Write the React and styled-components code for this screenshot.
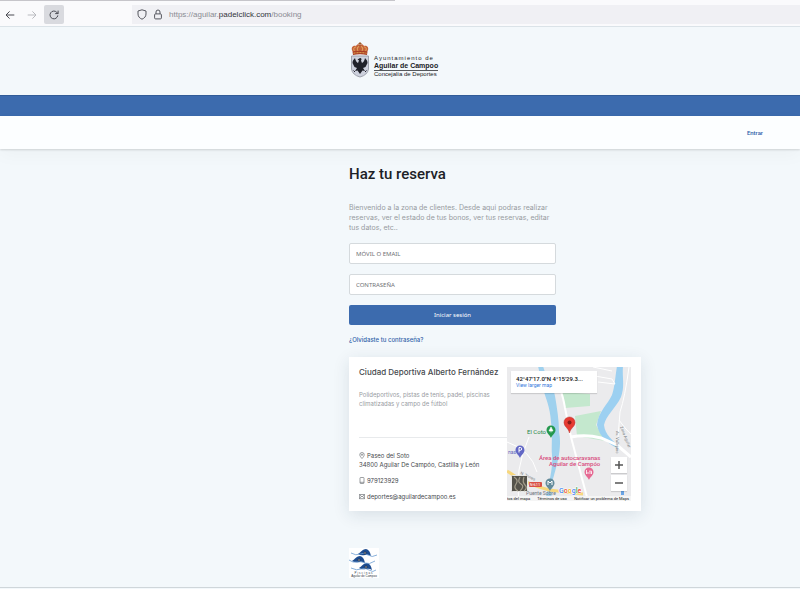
import styled, { createGlobalStyle } from "styled-components";

const GlobalStyle = createGlobalStyle`
  * {
    box-sizing: border-box;
  }

  body {
    margin: 0;
    background: #f3f8fb;
    color: #45484c;
    font-family: Inter, Roboto, sans-serif;
    font-size: 6px;
    line-height: 9px;
  }

  h1, h2, p {
    margin: 0;
  }

  a {
    color: #2f5fa8;
    text-decoration: none;
  }
`;

const App = () => {
  return (
    <>
      <GlobalStyle />
      <BrowserBar />
      <Header>
        <Column>
          <TownLogo />
        </Column>
      </Header>
      <Stripe />
      <Nav>
        <EnterLink href="#entrar">Entrar</EnterLink>
      </Nav>
      <Column as="main">
        <Login />
        <ClubCard />
      </Column>
      <Footer>
        <Column>
          <PoolLogo />
        </Column>
      </Footer>
    </>
  );
};

export default App;

/* ---------- browser ---------- */

const BrowserBar = () => (
  <Bar>
    <BarButton aria-label="Back">
      <svg width="10" height="10" viewBox="0 0 10 10" fill="none" stroke="#4a4b53">
        <path d="M9.3 5H1M4.6 1.4 1 5l3.6 3.6" />
      </svg>
    </BarButton>
    <BarButton aria-label="Forward">
      <svg width="10" height="10" viewBox="0 0 10 10" fill="none" stroke="#b9babf">
        <path d="M.7 5H9M5.4 1.4 9 5 5.4 8.6" />
      </svg>
    </BarButton>
    <BarButton aria-label="Reload" $active>
      <svg width="10" height="10" viewBox="0 0 10 10" fill="none" stroke="#4a4b53">
        <path d="M8.8 5.4A3.9 3.9 0 1 1 7.7 2.2L9 3.5M9.1.6v3H6.2" />
      </svg>
    </BarButton>
    <Address>
      <svg width="10" height="11" viewBox="0 0 10 11" fill="none" stroke="#55565e">
        <path d="M5 .8 9 2v3c0 2.600-1.700 4.200-4 5.200C2.700 9.200 1 7.600 1 5V2Z" />
      </svg>
      <svg width="8" height="11" viewBox="0 0 8 11" fill="none" stroke="#55565e">
        <rect x=".6" y="4.900" width="6.800" height="5" rx="1" />
        <path d="M2 4.900V3a2 2 0 0 1 4 0v1.900" />
      </svg>
      <span>
        https://aguilar.<b>padelclick.com</b>/booking
      </span>
    </Address>
  </Bar>
);

const Bar = styled.div`
  display: flex;
  align-items: center;
  gap: 2px;
  height: 27px;
  padding-top: 3px;
  background: linear-gradient(90deg, #c6c5ca, #c6c5ca) 0 0 / 395px 1px no-repeat #fafafc;
  border-bottom: 1px solid #dbe3e8;
`;

const BarButton = styled.button`
  display: grid;
  place-items: center;
  width: 20px;
  height: 19px;
  padding: 0;
  border: 0;
  border-radius: 2px;
  background: ${({ $active }) => ($active ? "#d9dadf" : "transparent")};
`;

const Address = styled.div`
  flex: 1;
  display: flex;
  align-items: center;
  gap: 7px;
  height: 19px;
  margin-left: 66px;
  padding-left: 5px;
  background: #f0f0f4;
  color: #8b8c93;
  font-family: "Liberation Sans", sans-serif;
  font-size: 8px;

  b {
    color: #33343b;
    font-weight: 400;
  }
`;

/* ---------- header ---------- */

const TownLogo = () => (
  <Town>
    <svg width="20" height="36" viewBox="0 0 20 36">
      <path d="M3 10C0 6 3 3 6 4c1-2 3-2 4-1 1-1 3-1 4 1 3-1 6 2 3 6Z" fill="#c4633a" />
      <path d="M10 0v4M8.500 1.500h3" stroke="#9c5b29" strokeWidth="1" />
      <path d="M4.500 9C3 7 4 5 6 5M8 9c-1-2-1-4 1-4.500M12 9c1-2 1-4-1-4.500M15.500 9C17 7 16 5 14 5" stroke="#efc168" fill="none" strokeWidth=".8" />
      <path d="M2.500 9.500q7.500-1.500 15 0L17 13q-7-1.500-14 0Z" fill="#a93d25" />
      <path d="M3.500 11.200q6.500-1.200 13 0" stroke="#edbd59" strokeDasharray="2 1" fill="none" />
      <path d="M1.500 14h17v13q-1 6-8.500 8-7.500-2-8.500-8Z" fill="#cdd1dd" stroke="#9ea2ad" />
      <path d="M10 16c1.800 0 1.800 1.500 1 2.500l1 2.500c1.500-.5 2.500-2.500 3-5 1.500 1.500 2.500 3 2.500 5L15.500 25 13 26l2 3-2.500-.5L10 32l-2.500-3.500L5 29l2-3-2.500-1L2.500 21c0-2 1-3.500 2.500-5 .5 2.500 1.500 4.500 3 5l1-2.500L7.500 17.500Z" fill="#20222a" />
      <path d="m5 30-1.500-1.500M15 30l1.500-1.500" stroke="#20222a" />
    </svg>
    <TownName>
      <span>Ayuntamiento de</span>
      <strong>Aguilar de Campoo</strong>
      <small>Concejalía de Deportes</small>
    </TownName>
  </Town>
);

const Column = styled.div`
  max-width: 451px;
  margin-left: auto;
  padding-right: 36px;
`;

const Header = styled.header`
  padding: 15px 0 17px;
`;

const Town = styled.div`
  display: flex;
  align-items: center;
  gap: 4px;
  padding-left: 1px;
`;

const TownName = styled.div`
  display: flex;
  flex-direction: column;
  padding-top: 12px;
  color: #202226;
  font-family: "Liberation Sans", sans-serif;
  font-size: 6px;
  line-height: 7px;

  span {
    letter-spacing: 1px;
  }

  strong {
    padding-bottom: 1px;
    border-bottom: 1px solid #55585c;
    font-size: 7px;
    font-weight: 900;
  }

  small {
    font-size: 6px;
  }
`;

const Stripe = styled.div`
  height: 21px;
  background: #3c6bae;
  border-top: 1px solid #315c98;
`;

const Nav = styled.nav`
  display: flex;
  justify-content: flex-end;
  padding: 12px 37px;
  background: #fcfeff;
  box-shadow: 0 1px 2px #00000024, 0 6px 18px #00000008;
`;

const EnterLink = styled.a`
  font-family: Roboto, sans-serif;
  font-weight: 500;
`;

/* ---------- login ---------- */

const Login = () => (
  <Form onSubmit={(e) => e.preventDefault()}>
    <h1>Haz tu reserva</h1>
    <p>
      Bienvenido a la zona de clientes. Desde aqui podras realizar reservas, ver el estado de tus
      bonos, ver tus reservas, editar tus datos, etc..
    </p>
    <Field type="text" placeholder="MÓVIL O EMAIL" aria-label="Móvil o email" />
    <Field type="password" placeholder="CONTRASEÑA" aria-label="Contraseña" />
    <Submit type="submit">Iniciar sesión</Submit>
    <ForgotLink href="#recuperar">¿Olvidaste tu contraseña?</ForgotLink>
  </Form>
);

const Form = styled.form`
  display: flex;
  flex-direction: column;
  gap: 10px;
  max-width: 207px;
  padding: 16px 0 13px;

  h1 {
    color: #1c2126;
    font-family: Roboto, sans-serif;
    font-size: 15px;
    line-height: 18px;
    font-weight: 500;
  }

  p {
    padding: 10px 4px 0 0;
    color: #979b9f;
    font-size: 7px;
    line-height: 10px;
  }
`;

const Field = styled.input`
  height: 21px;
  padding: 0 6px;
  border: 1px solid #d5dadd;
  border-radius: 2px;
  background: #fff;
  color: #45484c;
  font-family: "Noto Sans", sans-serif;
  font-size: 6px;

  &::placeholder {
    color: #6f7174;
  }
`;

const Submit = styled.button`
  height: 20px;
  border: 0;
  border-radius: 2px;
  background: #3c6bae;
  color: #fff;
  font-family: "Noto Sans", sans-serif;
  font-size: 6px;
`;

const ForgotLink = styled.a`
  align-self: flex-start;
  font-weight: 500;
`;

/* ---------- club card ---------- */

const ClubCard = () => (
  <Card>
    <Info>
      <h2>Ciudad Deportiva Alberto Fernández</h2>
      <p>Polideportivos, pistas de tenis, padel, piscinas climatizadas y campo de fútbol</p>
      <Contact>
        <div>
          <ContactIcon viewBox="0 0 6 7">
            <path d="M3 6.500C1.600 5 .8 3.800.8 2.700a2.200 2.200 0 0 1 4.400 0C5.200 3.800 4.400 5 3 6.500Z" />
            <circle cx="3" cy="2.700" r=".7" />
          </ContactIcon>
          Paseo del Soto
          <br />
          34800 Aguilar De Campóo, Castilla y León
        </div>
        <div>
          <ContactIcon viewBox="0 0 6 7">
            <rect x="1" y=".5" width="4" height="6" rx=".7" />
            <path d="M1 5.300h4" />
          </ContactIcon>
          979123929
        </div>
        <div>
          <ContactIcon viewBox="0 0 6 7">
            <path d="M.4 1.500h5.200v4.200H.4ZM.5 1.700 3 3.900l2.500-2.200M.5 5.500l1.700-2M5.500 5.500l-1.700-2" />
          </ContactIcon>
          deportes@aguilardecampoo.es
        </div>
      </Contact>
    </Info>
    <Map />
  </Card>
);

const Card = styled.section`
  display: flex;
  max-width: 292px;
  padding: 10px;
  background: #fff;
  box-shadow: 0 4px 16px #1c344c1f;
`;

const Info = styled.div`
  flex: 1;
  display: flex;
  flex-direction: column;
  min-width: 0;

  h2 {
    font-size: 8px;
    line-height: 10px;
    font-weight: 500;
    white-space: nowrap;
  }

  p {
    padding: 13px 8px 0 0;
    color: #989b9f;
  }
`;

const Contact = styled.address`
  display: flex;
  flex-direction: column;
  gap: 7px;
  margin-top: auto;
  padding-top: 13px;
  border-top: 1px solid #e8eaec;
  font-style: normal;
`;

const ContactIcon = styled.svg`
  width: 6px;
  height: 7px;
  margin-right: 2px;
  vertical-align: -1px;
  fill: none;
  stroke: #5b5f64;
  stroke-width: 0.6;
`;

/* ---------- map ---------- */

const Map = () => (
  <MapBox>
    <svg width="124" height="134" viewBox="0 0 124 134">
      <rect width="124" height="134" fill="#ebebed" />
      <path d="M55 25 83 27v12l-25 2ZM68 49l26-5-5 14 9 16-28-5Z" fill="#c4e8ce" />
      <path d="M31-1h5c3 12 10 18 12 30s4 24 4 36c3 14-1 30-6 47l-2 22h-6c5-22 8-34 7-46-1-10 1-20-1-33-1-16-5-22-8-34Z" fill="#9fd1ee" />
      <path d="M110-1h6c-1 12 2 20-2 31-5 11-15 18-17 28 1 10 8 14 18 25-12-4-23-13-25-25 1-13 11-21 15-30 3-9 3-17 5-29Z" fill="#9cd0f1" />
      <g fill="none" stroke="#fff">
        <path d="M53 22q3 7 5 19l6 29 17 64" strokeWidth="2" />
        <path d="M64 70q15-3 30 1l16 7 14 12" strokeWidth="3" />
        <path d="M122 0q-4 30-9 45l-3 38M112 53q8 11 12 14M0 75q24 8 30 30M12 134q-5-30 10-64" />
        <path d="m82 8 23 4 3 5-17-2M86 0l19 4" />
      </g>
      <path d="M0 104q18 13 42 19l34 4" fill="none" stroke="#f7d77d" strokeWidth="3" />
      <g fontFamily="Roboto, sans-serif" fontSize="6">
        <text x="20" y="67" fill="#1d8848">El Coto</text>
        <text x="1" y="87" fontSize="5" fill="#6065bd">nas</text>
        <g fill="#d84b7d" fontWeight="500">
          <text x="32" y="93">Área de autocaravanas</text>
          <text x="42" y="99">Aguilar de Campóo</text>
        </g>
        <text x="19" y="128" fill="#6d757d" fontSize="5">Puente Sobre</text>
        <g fill="#767b80" fontSize="4">
          <text transform="translate(109 64) rotate(90)">Av. Vallejano</text>
          <text transform="translate(113 60) rotate(68)">Zona Aguilar</text>
          <text transform="translate(13 107) rotate(25)">N. Torres</text>
        </g>
      </g>
      <rect x="22" y="115" width="13" height="5" rx="1" fill="#d95045" />
      <text x="28" y="119" fill="#fff" fontSize="4" textAnchor="middle" fontFamily="Roboto, sans-serif">N-611</text>
      <Place x={44} y={63} color="#24984e">
        <path d="m0-3-2 4h4ZM0 1v1.500" stroke="#fff" strokeWidth=".6" />
      </Place>
      <Place x={13} y={83} color="#6267c5">
        <path d="M-1 2.500v-5H.3a1.400 1.400 0 0 1 0 2.800H-1" fill="none" stroke="#fff" />
      </Place>
      <Place x={82} y={105} color="#e66993">
        <path d="M-2.500-2v4M-2.500 1h5v1M0-.8h2.500V1" fill="none" stroke="#fff" strokeWidth=".8" />
      </Place>
      <Place x={43} y={116} color="#648b9b">
        <path d="M-2 2v-4L0 0l2-2v4" fill="none" stroke="#fff" />
      </Place>
      <rect x="114" y="124" width="3" height="4" fill="#6aa5e6" />
      <path d="M62.500 66c-.7-5-5.500-6-5.500-10.500a5.500 5.500 0 0 1 11 0C68 60 63.200 61 62.500 66Z" fill="#e63b32" stroke="#b62d29" strokeWidth=".5" />
      <circle cx="62.500" cy="55.500" r="2" fill="#861d18" />
      <rect x="4.500" y="108.500" width="16" height="16" rx="1" fill="#55534b" stroke="#e7e7e5" />
      <path d="M7 110q5 3 2 7t2 7M13 110q-3 5 1 7t-1 7M17 110q-2 5 1 8t-1 6" fill="none" stroke="#a49e8c" strokeWidth="1.200" />
      <text x="52" y="126" fontSize="7" fontWeight="500" fontFamily="Roboto, sans-serif" stroke="#fff" strokeWidth="1" paintOrder="stroke">
        <tspan fill="#4285f4">G</tspan>
        <tspan fill="#ea4335">o</tspan>
        <tspan fill="#f0ae05">o</tspan>
        <tspan fill="#4285f4">g</tspan>
        <tspan fill="#34a853">l</tspan>
        <tspan fill="#ea4335">e</tspan>
      </text>
    </svg>
    <Coordinates>
      <strong>42°47'17.0"N 4°15'29.3...</strong>
      <a href="#mapa">View larger map</a>
    </Coordinates>
    <ZoomControls>
      <ZoomButton aria-label="Zoom in">
        <svg width="8" height="8" stroke="#555" strokeWidth="1.500">
          <path d="M0 4h8M4 0v8" />
        </svg>
      </ZoomButton>
      <ZoomButton aria-label="Zoom out">
        <svg width="8" height="8" stroke="#555" strokeWidth="1.500">
          <path d="M0 4h8" />
        </svg>
      </ZoomButton>
    </ZoomControls>
    <MapLegal>
      <span>tos del mapa</span>
      <a href="#terminos">Términos de uso</a>
      <a href="#problema">Notificar un problema de Maps</a>
    </MapLegal>
  </MapBox>
);

const Place = ({ x, y, color, children }) => (
  <g transform={`translate(${x} ${y})`}>
    <path d="M0 8C-1 5-4.500 3.500-4.500 0a4.500 4.500 0 0 1 9 0C4.500 3.500 1 5 0 8Z" fill={color} />
    <g fill="#fff">{children}</g>
  </g>
);

const MapBox = styled.div`
  position: relative;
  flex: none;
  overflow: hidden;

  > svg {
    display: block;
  }
`;

const Coordinates = styled.div`
  position: absolute;
  top: 4px;
  left: 4px;
  display: flex;
  flex-direction: column;
  width: 86px;
  padding: 4px 5px;
  background: #fff;
  box-shadow: 0 1px 1px #00000022;
  font-family: Roboto, sans-serif;
  font-size: 5px;
  line-height: 7px;
  white-space: nowrap;

  strong {
    color: #111;
    font-size: 6px;
    font-weight: 500;
  }

  a {
    color: #3478dc;
  }
`;

const ZoomControls = styled.div`
  position: absolute;
  right: 4px;
  bottom: 10px;
  display: flex;
  flex-direction: column;
  gap: 2px;
`;

const ZoomButton = styled.button`
  display: grid;
  place-items: center;
  width: 16px;
  height: 16px;
  padding: 0;
  border: 0;
  background: #fff;
  box-shadow: 0 1px 1px #00000022;
`;

const MapLegal = styled.div`
  position: absolute;
  right: 0;
  bottom: 0;
  left: 0;
  display: flex;
  justify-content: space-between;
  padding-right: 2px;
  background: #f5f5f5;
  color: #111;
  font-family: Roboto, sans-serif;
  font-size: 4px;
  line-height: 5px;
  white-space: nowrap;

  a {
    color: inherit;
  }
`;

/* ---------- footer ---------- */

const PoolLogo = () => (
  <svg width="30" height="30" viewBox="0 0 30 30">
    <rect width="30" height="30" fill="#fff" />
    <g fill="#1d4c8f">
      <path d="M9 6C12 4 14 1 17 1q4 1 5 7-3-2-6-1-4 1-7-1Z" />
      <path d="M3 13c3-2 5-5 8-5q4 1 5 7-3-2-6-1-4 1-7-1Z" />
      <path d="M10 20c3-2 5-5 8-5q4 1 5 7-3-2-6-1-4 1-7-1Z" />
    </g>
    <g fill="none" stroke="#6c9dd2" strokeWidth=".8">
      <path d="M2 5q5 3 9 1t8 1 9 0M0 12q4 3 8 2t8 1 10-2M2 20q6 3 10 1t8 1 7 0" />
    </g>
    <g fill="#fff" stroke="#202530" strokeWidth=".8">
      <circle cx="16" cy="5" r="1" />
      <circle cx="10" cy="12" r="1" />
      <circle cx="17" cy="19" r="1" />
    </g>
    <g fill="#343a47" fontFamily="Liberation Sans, sans-serif" textAnchor="middle">
      <text x="15" y="26" fontSize="3" letterSpacing="1">Piscinas</text>
      <text x="15" y="29" fontSize="3">Aguilar de Campoo</text>
    </g>
  </svg>
);

const Footer = styled.footer`
  padding: 37px 0 9px;
  border-bottom: 1px solid #cfd6da;

  svg {
    display: block;
  }
`;
